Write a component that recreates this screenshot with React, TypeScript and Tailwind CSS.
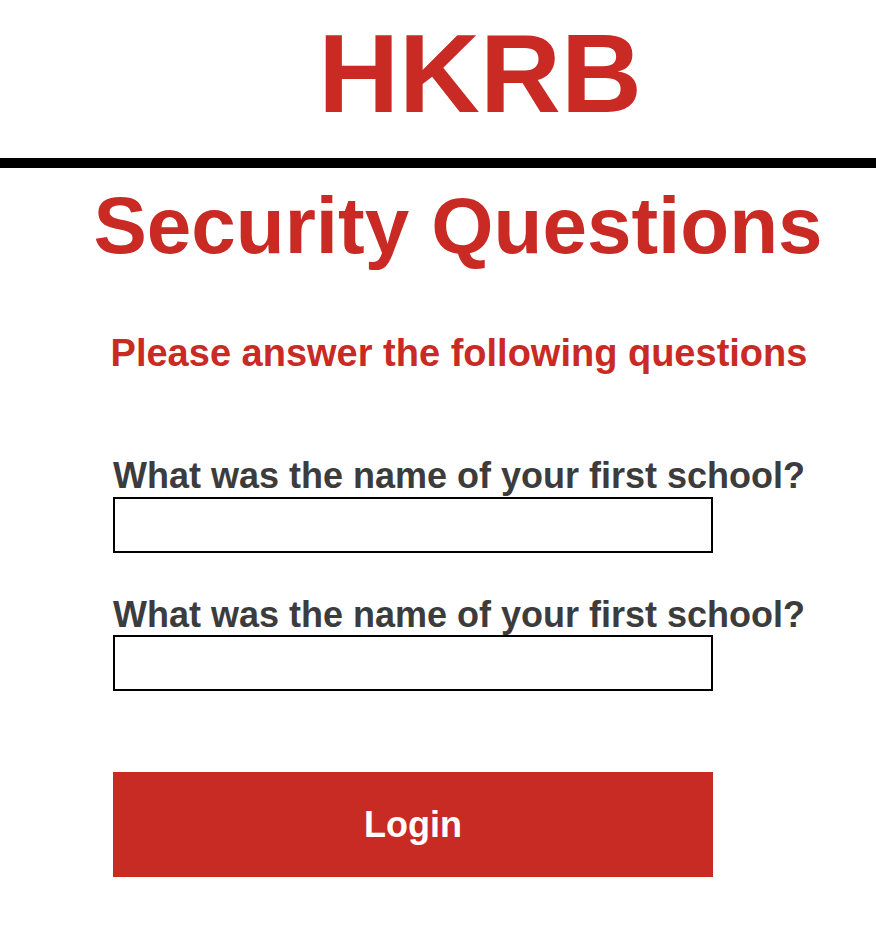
export default function App() {
  return (
    <div className="min-h-[950px] w-[876px] bg-white font-['Liberation_Sans',Arial,sans-serif] font-bold">
      {/* brand */}
      <h1 className="pt-[18px] pl-[84px] text-center text-[112px] leading-none text-[#c92a24]">
        HKRB
      </h1>
      <div className="mt-[28px] h-[10px] w-full bg-black" />

      <h2 className="mt-[18px] pl-[40px] text-center text-[80px] leading-none text-[#c92a24]">
        Security Questions
      </h2>
      <p className="mt-[68px] pl-[42px] text-center text-[38px] leading-none text-[#c92a24]">
        Please answer the following questions
      </p>

      <form className="ml-[113px] mt-[86px] flex w-[600px] flex-col">
        <label className="whitespace-nowrap text-[36px] leading-none text-[#3c3c3c]">
          What was the name of your first school?
        </label>
        <input
          type="text"
          className="mt-[3px] h-[56px] w-full border-2 border-black bg-white px-3 outline-none"
        />

        <label className="mt-[44px] whitespace-nowrap text-[36px] leading-none text-[#3c3c3c]">
          What was the name of your first school?
        </label>
        <input
          type="text"
          className="mt-[2px] h-[56px] w-full border-2 border-black bg-white px-3 outline-none"
        />

        <button
          type="button"
          className="mt-[81px] flex h-[105px] w-full items-center justify-center bg-[#c82a24] text-[36px] leading-none text-white"
        >
          Login
        </button>
      </form>
    </div>
  );
}
